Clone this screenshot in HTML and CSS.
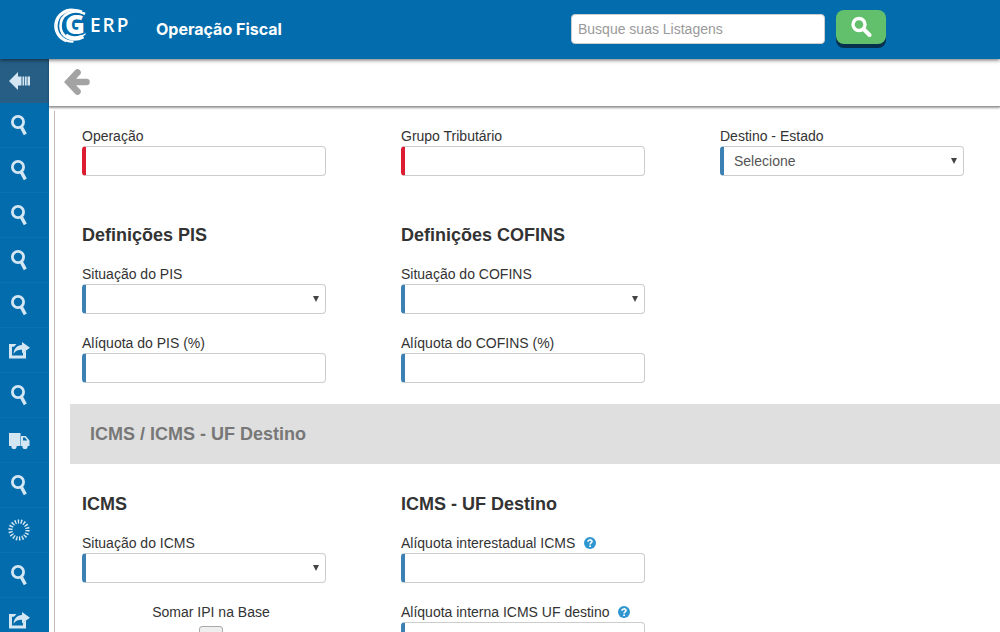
FILE: index.html
```html
<!DOCTYPE html>
<html lang="pt-BR">
<head>
<meta charset="utf-8">
<meta name="viewport" content="width=device-width, initial-scale=1">
<title>GERP - Operação Fiscal</title>
<link rel="stylesheet" href="styles.css">
</head>
<body>
<svg class="sprite" aria-hidden="true">
  <symbol id="i-search" viewBox="0 0 22 22">
    <circle cx="10" cy="8" r="5.600" fill="none" stroke="currentColor" stroke-width="2.800"/>
    <path d="M11.500 13.300l3-1.700 4.300 7.800-3 1.800z" fill="currentColor"/>
  </symbol>
  <symbol id="i-share" viewBox="0 0 22 22">
    <path d="M1 5h7.500L6 7.800H4v8.700h11v-3l3-2.300v8.300H1z" fill="currentColor"/>
    <path d="M14 3l8 5.700-8 5.600v-3.500c-4 0-6 .8-8.500 4C6 9.500 9 6.200 14 6z" fill="currentColor"/>
  </symbol>
  <symbol id="i-truck" viewBox="0 0 22 22">
    <path d="M1 4h11.500v13H1zM12 7h5.700l3.800 4.500V17H12zM15 8.500v3h4.300l-2.400-3z" fill="currentColor" fill-rule="evenodd"/>
    <circle cx="6" cy="17.500" r="2.600" fill="currentColor"/>
    <circle cx="17" cy="17.500" r="2.600" fill="currentColor"/>
  </symbol>
  <symbol id="i-spinner" viewBox="0 0 22 22">
    <circle cx="11" cy="11" r="8.500" fill="none" stroke="currentColor" stroke-width="4.200" stroke-dasharray="1.400 1.567"/>
  </symbol>
  <symbol id="i-help" viewBox="0 0 12 12">
    <circle cx="6" cy="6" r="6" fill="#2f96d0"/>
    <path d="M4 4.700C4 2.400 8 2.300 8 4.600 8 6 6.100 5.900 6.100 7.400" fill="none" stroke="#fff" stroke-width="1.600"/>
    <path d="M5.200 8.400h1.800V10H5.200z" fill="#fff"/>
  </symbol>
</svg>

<header class="topbar">
  <a class="logo" href="#" aria-label="GERP">
    <svg class="logo-mark" viewBox="0 0 38 36" aria-hidden="true">
      <g fill="none" stroke="#fff">
        <path d="M21 1.500A16.500 16.500 0 0 0 14 33.500" stroke-width="1.600"/>
        <path d="M30 3.500C18-1 4.500 5 4.500 18c0 9 8 16 17 15.500" stroke-width="2.200"/>
        <path d="M33 6C21 0 8.500 6 8.500 18c0 11 12 17 23 11" stroke-width="2.600"/>
        <path d="M14 27c5 4 13 4 19-2" stroke-width="3"/>
      </g>
      <text x="13" y="26">G</text>
    </svg>
    <span class="logo-text">ERP</span>
  </a>
  <h1 class="page-title">Operação Fiscal</h1>
  <form class="search">
    <input class="search-input" type="text" placeholder="Busque suas Listagens" aria-label="Busque suas Listagens">
    <button class="search-button" type="button" aria-label="Buscar">
      <svg viewBox="0 0 22 22" aria-hidden="true"><circle cx="9" cy="8.500" r="6" fill="none" stroke="#fff" stroke-width="3.400"/><path d="M13.500 13l6 6" stroke="#fff" stroke-width="4" stroke-linecap="round"/></svg>
    </button>
  </form>
</header>

<div class="shell">
  <nav class="sidebar" aria-label="Menu">
    <a class="side-item side-toggle" href="#" aria-label="Recolher"><svg viewBox="0 0 22 22"><path d="M1 11l9-9v4.500h3.500v9H10V20zM14.500 6.500h1.700v9h-1.700zM17 6.500h1.700v9H17zM19.500 6.500H22v9h-2.500z" fill="currentColor"/></svg></a>
    <a class="side-item" href="#" aria-label="Consulta"><svg><use href="#i-search"/></svg></a>
    <a class="side-item" href="#" aria-label="Consulta"><svg><use href="#i-search"/></svg></a>
    <a class="side-item" href="#" aria-label="Consulta"><svg><use href="#i-search"/></svg></a>
    <a class="side-item" href="#" aria-label="Consulta"><svg><use href="#i-search"/></svg></a>
    <a class="side-item" href="#" aria-label="Consulta"><svg><use href="#i-search"/></svg></a>
    <a class="side-item" href="#" aria-label="Compartilhar"><svg><use href="#i-share"/></svg></a>
    <a class="side-item" href="#" aria-label="Consulta"><svg><use href="#i-search"/></svg></a>
    <a class="side-item" href="#" aria-label="Transporte"><svg><use href="#i-truck"/></svg></a>
    <a class="side-item" href="#" aria-label="Consulta"><svg><use href="#i-search"/></svg></a>
    <a class="side-item" href="#" aria-label="Processos"><svg><use href="#i-spinner"/></svg></a>
    <a class="side-item" href="#" aria-label="Consulta"><svg><use href="#i-search"/></svg></a>
    <a class="side-item" href="#" aria-label="Compartilhar"><svg><use href="#i-share"/></svg></a>
  </nav>

  <main class="content">
    <div class="toolbar">
      <a class="back" href="#" aria-label="Voltar"><svg viewBox="0 0 26 26"><path d="M13.500 3.500L4.500 13l9 9.500M6 13h16.500" fill="none" stroke="#a3a3a3" stroke-width="6.600" stroke-linecap="round" stroke-linejoin="miter"/></svg></a>
    </div>
    <form class="panel">
      <div class="row">
        <div class="field"><label for="operacao">Operação</label><input class="control required" id="operacao" type="text"></div>
        <div class="field"><label for="grupo">Grupo Tributário</label><input class="control required" id="grupo" type="text"></div>
        <div class="field"><label for="destino">Destino - Estado</label><div class="select"><select class="control" id="destino"><option>Selecione</option></select></div></div>
      </div>
      <div class="row row-taxes">
        <section class="group">
          <h2>Definições PIS</h2>
          <div class="field"><label for="sit-pis">Situação do PIS</label><div class="select"><select class="control" id="sit-pis"><option></option></select></div></div>
          <div class="field"><label for="aliq-pis">Alíquota do PIS (%)</label><input class="control" id="aliq-pis" type="text"></div>
        </section>
        <section class="group">
          <h2>Definições COFINS</h2>
          <div class="field"><label for="sit-cofins">Situação do COFINS</label><div class="select"><select class="control" id="sit-cofins"><option></option></select></div></div>
          <div class="field"><label for="aliq-cofins">Alíquota do COFINS (%)</label><input class="control" id="aliq-cofins" type="text"></div>
        </section>
      </div>
      <h2 class="band">ICMS / ICMS - UF Destino</h2>
      <div class="row">
        <section class="group">
          <h2>ICMS</h2>
          <div class="field"><label for="sit-icms">Situação do ICMS</label><div class="select"><select class="control" id="sit-icms"><option></option></select></div></div>
          <div class="field check-field"><label for="somar-ipi">Somar IPI na Base</label><input class="check" id="somar-ipi" type="checkbox"></div>
        </section>
        <section class="group">
          <h2>ICMS - UF Destino</h2>
          <div class="field"><label for="aliq-inter">Alíquota interestadual ICMS <svg class="help"><use href="#i-help"/></svg></label><input class="control" id="aliq-inter" type="text"></div>
          <div class="field"><label for="aliq-interna">Alíquota interna ICMS UF destino <svg class="help"><use href="#i-help"/></svg></label><input class="control" id="aliq-interna" type="text"></div>
        </section>
      </div>
    </form>
  </main>
</div>
</body>
</html>
```

FILE: styles.css
```css
* { box-sizing: border-box; }

body {
  margin: 0;
  height: 100vh;
  display: flex;
  flex-direction: column;
  overflow: hidden;
  background: #fff;
  color: #333;
  font: 14px/20px "Liberation Sans", Arial, sans-serif;
}

.sprite { position: absolute; width: 0; height: 0; }

.topbar {
  position: relative;
  z-index: 1;
  flex: none;
  display: flex;
  align-items: center;
  height: 59px;
  padding: 0 0 2px 52px;
  background: #026cac;
  box-shadow: 0 1px 4px rgba(0, 0, 0, 0.6);
}

.logo {
  display: flex;
  align-items: center;
  width: 104px;
  padding-bottom: 6px;
  color: #fff;
  text-decoration: none;
}
.logo-mark { width: 38px; height: 36px; fill: #fff; overflow: visible; }
.logo-mark text {
  font: 800 27px "Open Sans", sans-serif;
  stroke: #026cac;
  stroke-width: 3px;
  paint-order: stroke;
}
.logo-text { padding-bottom: 2px; font: 600 19px/24px "Open Sans", sans-serif; letter-spacing: 2px; }

.page-title { margin: 0; color: #fff; font: 700 16px/24px Inter, sans-serif; }

.search { display: flex; align-items: center; gap: 11px; margin: 0 114px 0 auto; }
.search-input {
  width: 254px;
  height: 30px;
  padding: 0 6px;
  border: 1px solid #ccc;
  border-radius: 4px;
  background: #fff;
  color: #555;
  font: inherit;
}
.search-input::placeholder { color: #999; opacity: 1; }
.search-button {
  display: grid;
  place-items: center;
  width: 50px;
  height: 34px;
  margin-bottom: 4px;
  padding: 0;
  border: 0;
  border-radius: 8px;
  background: #62c06c;
  box-shadow: 0 4px 0 #06304d;
}
.search-button svg { width: 22px; height: 22px; }

.shell { flex: 1; display: flex; min-height: 0; }

.sidebar { flex: none; width: 49px; overflow: hidden; background: #026cac; }
.side-item {
  display: flex;
  align-items: center;
  height: 45px;
  padding-left: 8px;
  border-bottom: 1px solid #0b72b1;
  color: #d5e6f3;
}
.side-item svg { width: 22px; height: 22px; }
.side-toggle { height: 44px; background: #265e86; border-bottom: 0; }

.content { flex: 1; min-width: 0; display: flex; flex-direction: column; }
.toolbar {
  flex: none;
  display: flex;
  align-items: center;
  height: 48px;
  padding: 0 15px 2px;
  border-bottom: 1px solid #999;
  box-shadow: 0 1px 2px rgba(0, 0, 0, 0.4);
}
.back svg { display: block; width: 26px; height: 26px; }

.panel { flex: 1; margin: 4px 0 0 5px; padding: 15px 0 0 15px; border-left: 1px solid #bbb; }
.row {
  display: grid;
  grid-template-columns: repeat(3, minmax(0, 1fr));
  gap: 75px;
  padding: 0 36px 0 12px;
}
.row-taxes { margin-top: 49px; }
.group { display: flex; flex-direction: column; gap: 19px; }
.panel h2 { margin: 0; font-size: 18px; line-height: 20px; font-weight: bold; }
.panel .band {
  margin: 21px 0 30px;
  padding: 20px;
  background: #dfdfdf;
  color: #777;
}

.field label { display: block; }
.control {
  display: block;
  width: 100%;
  height: 30px;
  padding: 0 10px;
  border: 1px solid #ccc;
  border-left: 4px solid #3c80b4;
  border-radius: 4px;
  background: #fff;
  color: #555;
  font: inherit;
  appearance: none;
}
.required { border-left-color: #dc1c30; }
.select { position: relative; }
.select::after {
  content: "";
  position: absolute;
  right: 7px;
  top: 12px;
  width: 6px;
  height: 6px;
  background: #444;
  clip-path: polygon(0 0, 100% 0, 50% 100%);
  pointer-events: none;
}
.help { width: 12px; height: 12px; margin-left: 5px; vertical-align: -1px; }

.check-field { display: flex; flex-direction: column; align-items: center; gap: 4px; padding-left: 14px; }
.check {
  width: 24px;
  height: 24px;
  margin: 0;
  border: 1px solid #aaa;
  border-radius: 3px;
  background: #eee;
  appearance: none;
}
```
